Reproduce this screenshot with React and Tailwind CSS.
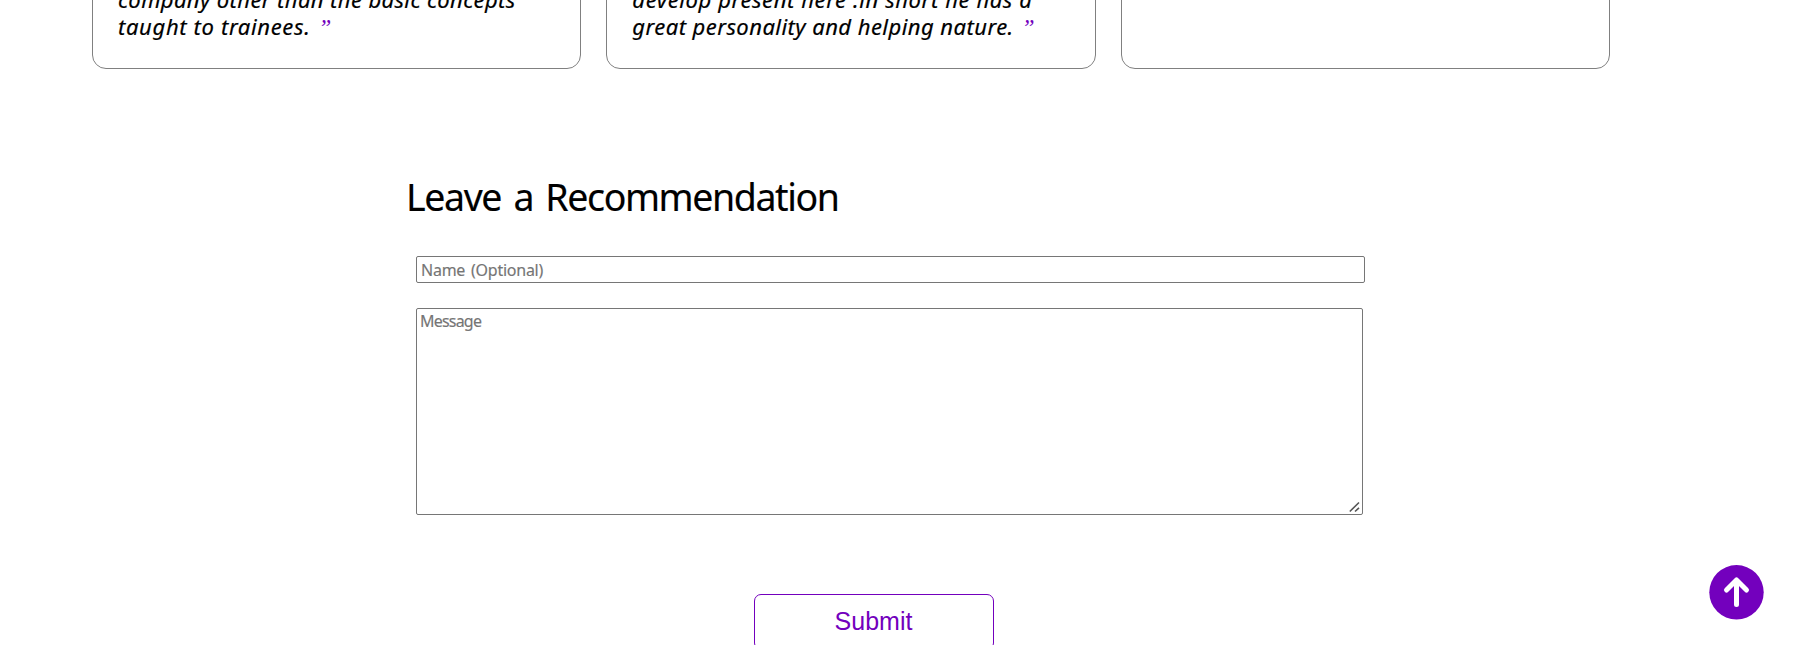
const quotes = [
  {
    lines: ["company other than the basic concepts", "taught to trainees."],
    spacing: ["tracking-[0.4px]", "tracking-[0.65px]"],
  },
  {
    lines: ["develop present here .in short he has a", "great personality and helping nature."],
    spacing: ["tracking-[0.6px]", "tracking-[0.45px]"],
  },
  { lines: [], spacing: [] },
];

function QuoteCard({ lines, spacing }) {
  return (
    <article className="flex h-[89px] flex-col rounded-[14px] border border-[#808080] px-[25px] pt-[5px] text-[22px] leading-[27px] italic">
      {lines.map((line, i) => (
        <p key={line} className="h-[27px] whitespace-nowrap [-webkit-text-stroke:0.2px_currentColor]">
          <span className={spacing[i]}>{line}</span>
          {i === lines.length - 1 && (
            <span className="ml-2 font-['Liberation_Serif',serif] text-[23px] leading-none text-[#7300bd] [-webkit-text-stroke:0px]">”</span>
          )}
        </p>
      ))}
    </article>
  );
}

export default function App() {
  return (
    <main className="h-[645px] w-full overflow-hidden bg-white font-['Trebuchet_MS','Noto_Sans',sans-serif] text-black">
      <section className="-mt-5 ml-[92px] grid w-[1518px] grid-cols-3 gap-[25px]">
        {quotes.map((q, i) => (
          <QuoteCard key={i} {...q} />
        ))}
      </section>
      <form className="mt-[103px] ml-[406px] flex flex-col">
        <h2 className="h-[50px] text-[37.5px] leading-[50px] tracking-[-1.4px] whitespace-nowrap [-webkit-text-stroke:0.15px_currentColor] [word-spacing:4px]">
          Leave a Recommendation
        </h2>
        <input
          placeholder="Name (Optional)"
          className="mt-[34px] ml-[10px] h-[27px] w-[949px] rounded-[2px] border border-[#767676] px-1 text-[16px] tracking-[-0.25px] [word-spacing:2px] [-webkit-text-stroke:0.15px_#757575] placeholder:text-[#757575]"
        />
        <div className="relative mt-[25px] ml-[10px] h-[207px] w-[947px]">
          <textarea
            placeholder="Message"
            className="block size-full resize-none rounded-[2px] border border-[#767676] px-[3px] py-[2px] text-[16px] leading-[20px] tracking-[-0.8px] [-webkit-text-stroke:0.15px_#757575] placeholder:text-[#757575]"
          />
          <svg viewBox="0 0 12 12" className="pointer-events-none absolute right-[2px] bottom-[2px] size-3">
            <path d="M0.8 10.5L10 1.5M6 10.5L10 6.8" fill="none" stroke="#555" strokeWidth="1.6" />
          </svg>
        </div>
        <button
          type="button"
          className="mt-[79px] ml-[348px] h-[56px] w-[240px] rounded-[7px] border border-[#7300bd] pr-px font-['Liberation_Sans',Arial,sans-serif] text-[25px] text-[#7300bd]"
        >
          Submit
        </button>
      </form>
      <a href="#" aria-label="Back to top" className="fixed top-[565px] left-[1709px] size-[55px]">
        <svg viewBox="0 0 55 55" className="size-full">
          <circle cx="27.5" cy="27.3" r="27.2" fill="#7300bd" />
          <path d="M27.5 39.5V15.5M17.5 25L27.5 15L37.5 25" fill="none" stroke="#fff" strokeWidth="5" strokeLinecap="round" strokeLinejoin="round" />
        </svg>
      </a>
    </main>
  );
}
